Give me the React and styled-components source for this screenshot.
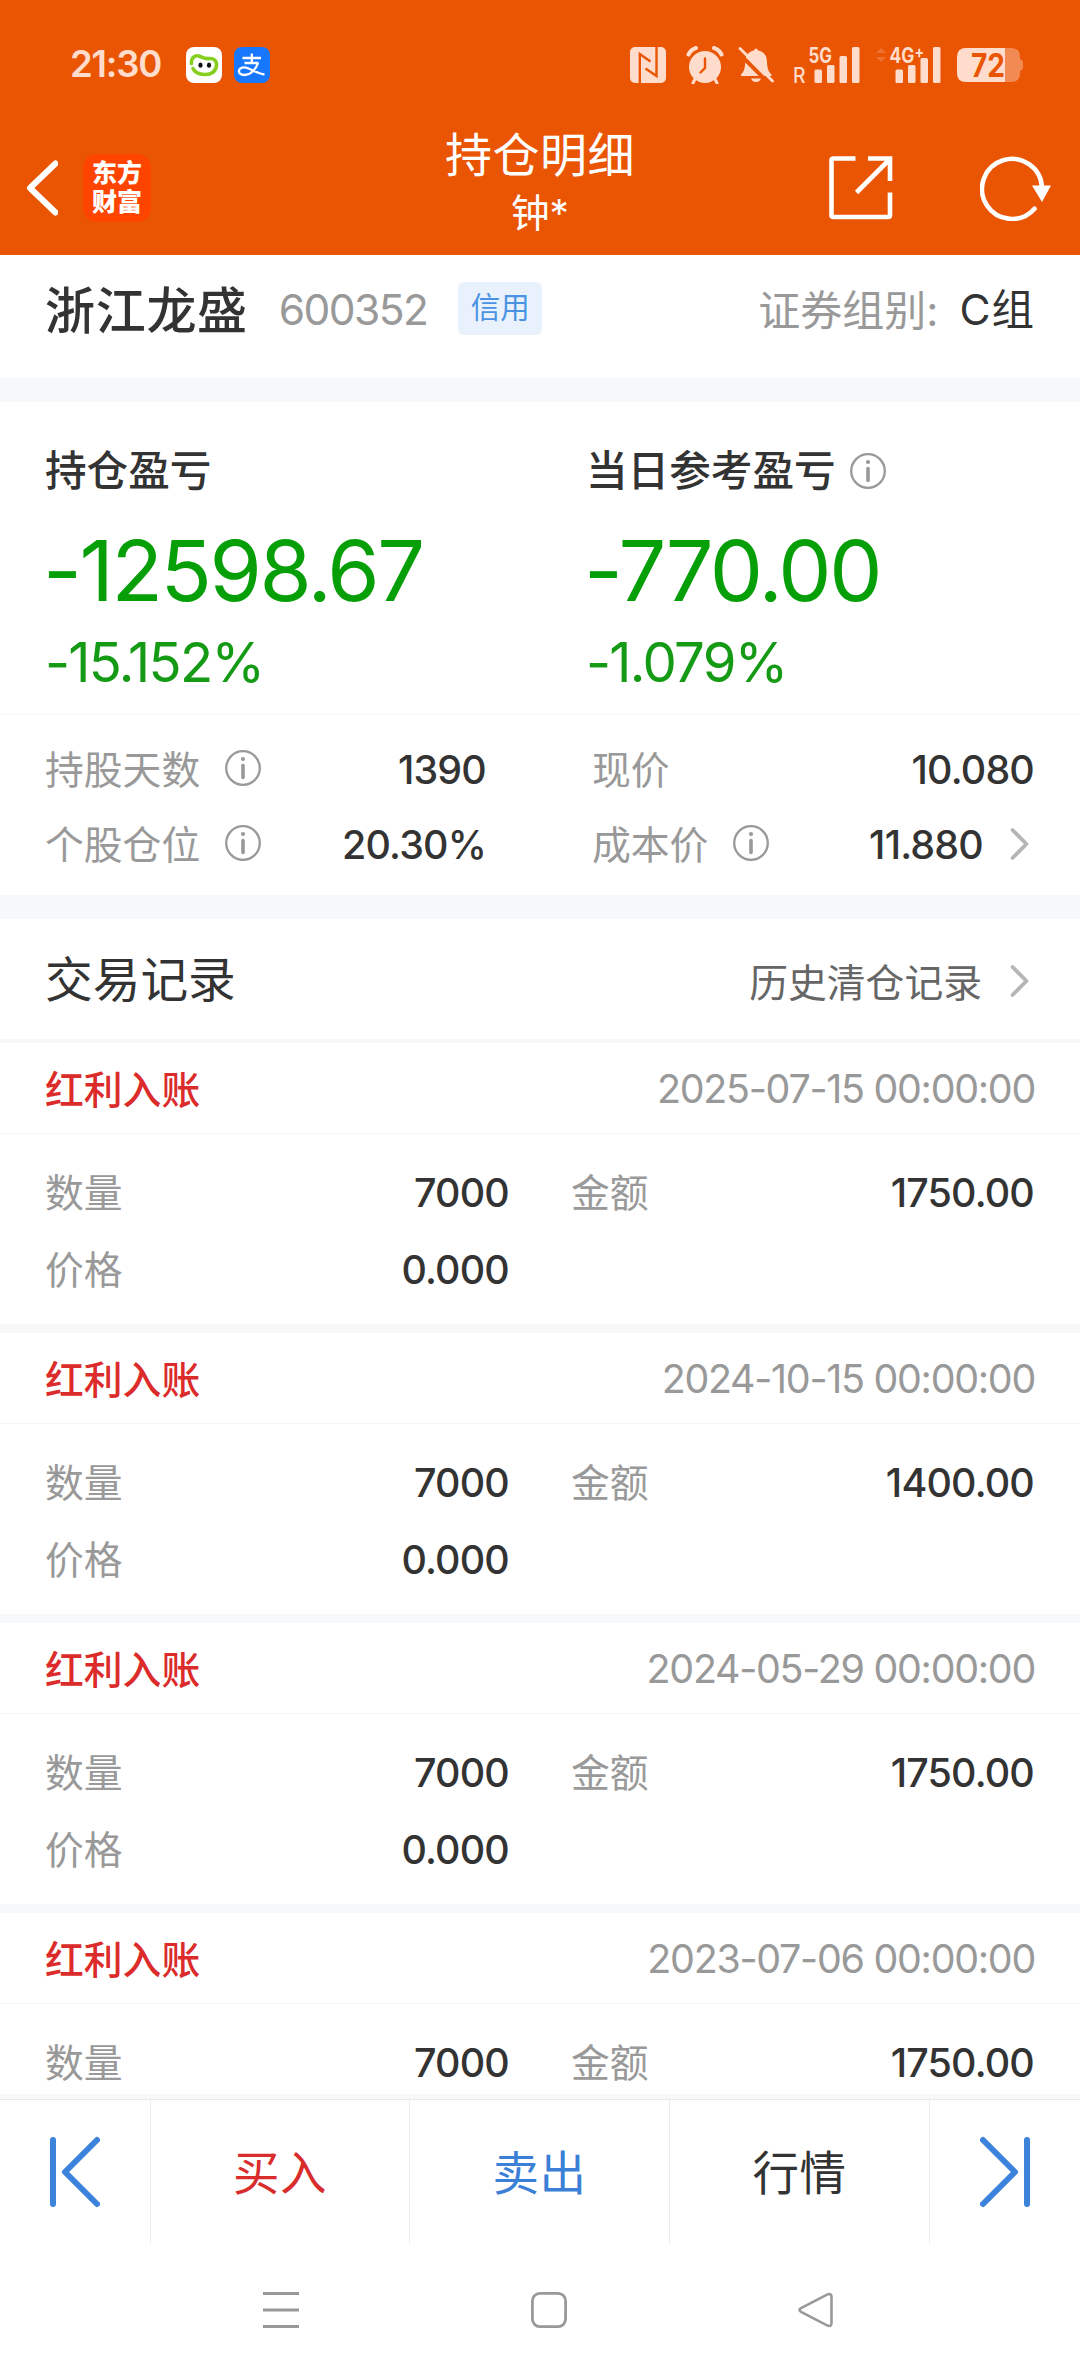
import React from "react";
import styled, { createGlobalStyle } from "styled-components";

const GlobalStyle = createGlobalStyle`
  * {
    box-sizing: border-box;
  }

  body {
    margin: 0;
    background: #fff;
    font-family: "Inter", "Noto Sans CJK SC", sans-serif;
    line-height: 1;
    color: #333;
  }

  svg {
    display: block;
    flex: none;
  }
`;

const Screen = styled.div`
  display: flex;
  flex-direction: column;
  width: 1080px;
  height: 2376px;
  overflow: hidden;
  background: #fff;
`;

const Text = styled.span`
  flex: none;
  white-space: pre;
  font-size: ${({ $size }) => $size || 39}px;
  font-weight: ${({ $weight }) => $weight || 400};
  letter-spacing: ${({ $spacing }) => $spacing || 0}px;
  color: ${({ $color }) => $color || "#333"};
`;

/* ---------- header ---------- */

const Header = styled.header`
  height: 255px;
  background: #ea5504;
  color: #fff;
`;

const StatusBar = styled.div`
  display: flex;
  align-items: center;
  height: 129px;
  padding: 0 57px 0 70px;
`;

const Clock = styled.span`
  width: 116px;
  font-size: 36.5px;
  font-weight: 600;
  letter-spacing: -1.2px;
  color: #ffdccb;
`;

const AppIcons = styled.div`
  display: flex;
  gap: 12px;
  flex: 1;
`;

const StatusIcons = styled.div`
  display: flex;
  align-items: center;
`;

const Gap = styled.i`
  width: ${({ $w }) => $w}px;
`;

const TitleBar = styled.div`
  display: grid;
  grid-template-columns: 1fr 240px 1fr;
  height: 126px;
`;

const TitleLeft = styled.div`
  display: flex;
  align-items: center;
  gap: 25px;
  height: 117px;
  padding-left: 26px;
`;

const TitleRight = styled.div`
  display: flex;
  align-items: center;
  justify-content: flex-end;
  gap: 87px;
  height: 117px;
  padding-right: 28px;
`;

const TitleCenter = styled.div`
  display: flex;
  flex-direction: column;
  align-items: center;
`;

const Title = styled.h1`
  margin: 2px 0 0;
  font-size: 47px;
  font-weight: 400;
  line-height: 48px;
  letter-spacing: 0.5px;
  white-space: nowrap;
`;

const Subtitle = styled.div`
  margin-top: 13px;
  font-size: 38.5px;
  line-height: 42px;
`;

const Logo = styled.div`
  display: flex;
  flex-direction: column;
  justify-content: center;
  align-items: center;
  width: 68px;
  height: 68px;
  border-radius: 14px;
  background: #ff4400;
  font-size: 25px;
  font-weight: 900;
  line-height: 29px;
`;

/* ---------- content ---------- */

const Content = styled.main`
  flex: 1;
  overflow: hidden;
`;

const Divider = styled.div`
  height: ${({ $h }) => $h}px;
  background: #f6f8fa;
`;

const StockRow = styled.section`
  display: flex;
  align-items: center;
  height: 123px;
  padding: 0 45px 12px;
`;

const Badge = styled.span`
  display: flex;
  align-items: center;
  justify-content: center;
  width: 84px;
  height: 53px;
  margin: -5px auto 0 31px;
  border-radius: 6px;
  background: #e9f2fc;
  font-size: 29.5px;
  color: #4a92e3;
`;

const ProfitPanel = styled.section`
  display: grid;
  grid-template-columns: 541px 1fr;
  height: 313px;
  padding: 46px 46px 0 45px;
  border-bottom: 1px solid #f5f6f8;
`;

const ProfitLabel = styled.div`
  display: flex;
  align-items: center;
  gap: 14px;
  height: 48px;
  font-size: 41.6px;
  font-weight: 500;

  svg {
    margin-top: -2px;
  }
`;

const ProfitValue = styled.div`
  margin: 32px 0 0 -2px;
  font-size: 84.5px;
  line-height: 84px;
  letter-spacing: -2.4px;
  color: #079f07;
`;

const ProfitRate = styled.div`
  margin-top: 22px;
  font-size: 54.5px;
  line-height: 56px;
  letter-spacing: -1.7px;
  color: #149a14;
`;

const StatGrid = styled.section`
  display: grid;
  grid-template-columns: 441px 442px;
  column-gap: 106px;
  grid-auto-rows: 75px;
  height: 180px;
  padding: 18px 46px 0 45px;
`;

const Stat = styled.div`
  display: flex;
  align-items: center;
  justify-content: space-between;
`;

const StatName = styled.div`
  display: flex;
  align-items: center;
  gap: 25px;
  font-size: 38.8px;
  color: #999;

  svg {
    margin-top: -5px;
  }
`;

const StatValue = styled.div`
  display: flex;
  align-items: center;
  gap: 27px;
  font-size: 39.4px;
  font-weight: 500;
  letter-spacing: -0.8px;

  svg {
    margin: -4px 5px 0 0;
  }
`;

const SectionHead = styled.div`
  display: flex;
  align-items: center;
  justify-content: space-between;
  height: 124px;
  padding: 4px 51px 0 45px;
  border-bottom: 4px solid #f6f8f9;
`;

const HistoryLink = styled.div`
  display: flex;
  align-items: center;
  gap: 28px;
  padding-top: 5px;

  svg {
    margin-top: -5px;
  }
`;

const Record = styled.article`
  height: 290px;
  border-bottom: 9px solid #f6f8fa;
`;

const RecordHead = styled.div`
  display: flex;
  align-items: center;
  justify-content: space-between;
  height: 91px;
  padding: 4px 45px 0;
  border-bottom: 1px solid #f4f5f7;
`;

const RecordBody = styled.div`
  display: grid;
  grid-template-columns: 464px 463px;
  column-gap: 62px;
  grid-auto-rows: 77px;
  padding: 21px 46px 0 45px;
`;

/* ---------- bottom ---------- */

const BottomBar = styled.footer`
  display: grid;
  grid-template-columns: 151px 259px 260px 260px 150px;
  height: 150px;
  border-top: 5px solid #f6f8f9;
  box-shadow: inset 0 1px 0 #e9e9ea;
`;

const BottomItem = styled.div`
  display: flex;
  align-items: center;
  justify-content: center;
  padding-top: ${({ $color }) => ($color ? 4 : 1)}px;
  border-right: ${({ $last }) => ($last ? "none" : "1px solid #ececee")};
  font-size: 46.5px;
  letter-spacing: 0.6px;
  color: ${({ $color }) => $color};
`;

const SystemNav = styled.nav`
  display: flex;
  justify-content: space-between;
  height: 132px;
  padding: 48px 246px 0 263px;
`;

/* ---------- icons ---------- */

const InfoIcon = () => (
  <svg width="36" height="36" viewBox="0 0 36 36" fill="none">
    <circle cx="18" cy="18" r="16.8" stroke="#999" strokeWidth="2.3" />
    <circle cx="18" cy="9" r="2.1" fill="#999" />
    <path d="M18 15.5v12" stroke="#999" strokeWidth="3.6" strokeLinecap="round" />
  </svg>
);

const ArrowIcon = () => (
  <svg width="19" height="34" viewBox="0 0 19 34" fill="none">
    <path d="M2.500 3l14 14-14 14" stroke="#b5b5b5" strokeWidth="3.8" strokeLinecap="round" strokeLinejoin="round" />
  </svg>
);

const BackIcon = () => (
  <svg width="32" height="56" viewBox="0 0 32 56" fill="none">
    <path d="M29.5 3.5L4 28l25.5 24.5" stroke="#fff" strokeWidth="6" strokeLinecap="round" strokeLinejoin="round" />
  </svg>
);

const ShareIcon = () => (
  <svg width="64" height="64" viewBox="0 0 64 64" fill="none" stroke="#fff" strokeWidth="4.6">
    <path d="M26.5 2.5H4.5Q2.5 2.5 2.5 4.5V59Q2.5 61 4.5 61H59Q61 61 61 59V36.5" />
    <path d="M39 2.5H61V25M60 4L27.5 36.5" />
  </svg>
);

const RefreshIcon = () => (
  <svg width="72" height="66" viewBox="0 0 72 66" fill="none">
    <path d="M54.500 53.800A30 30 0 1 1 62 33" stroke="#fff" strokeWidth="4.600" strokeLinecap="round" />
    <path d="M52 30.500H71L62 47z" fill="#fff" />
  </svg>
);

const ChatIcon = () => (
  <svg width="36" height="36" viewBox="0 0 36 36" fill="none">
    <rect width="36" height="36" rx="8" fill="#fff" />
    <path
      d="M5.500 16.500C5 11 9 7.500 13.500 9.200C17 10.600 18.500 12 22.500 11.600C28 11 31 14 30.500 18.500C30 24.500 25 28 18.500 27.500C12.500 27.200 8.500 25 7 21.500"
      stroke="#86cf1e"
      strokeWidth="3.600"
      strokeLinecap="round"
    />
    <ellipse cx="14.500" cy="18.200" rx="2.100" ry="2.600" fill="#111" />
    <ellipse cx="23" cy="18.200" rx="2.100" ry="2.600" fill="#111" />
  </svg>
);

const PayIcon = () => (
  <svg width="36" height="36" viewBox="0 0 36 36" fill="none" stroke="#fff">
    <rect width="36" height="36" rx="8" fill="#1777ff" stroke="none" />
    <path d="M8.500 11H27M17.800 6.500V16M10.500 16H24.500" strokeWidth="2.300" />
    <path
      d="M24 16C22 22 17 28 10.500 28C6.500 28 4.500 26 5 23.500C5.500 21 8.500 19.800 12 20.700C17 22 23 26.500 30.500 27.500"
      strokeWidth="2.300"
    />
  </svg>
);

const NfcIcon = () => (
  <svg width="36" height="36" viewBox="0 0 36 36" fill="none">
    <rect width="36" height="36" rx="5" fill="#ffdccb" />
    <path d="M9.800 36V7L20.500 14.500M26.500 0V29L15.500 21.500" stroke="#ea5504" strokeWidth="2.400" />
  </svg>
);

const AlarmIcon = () => (
  <svg width="38" height="38" viewBox="0 0 38 38" fill="none" stroke="#ffdccb">
    <circle cx="19" cy="21" r="16" fill="#ffdccb" stroke="none" />
    <path d="M2.500 8.500Q5 3.500 10 2M35.500 8.500Q33 3.500 28 2" strokeWidth="4" strokeLinecap="round" />
    <path d="M9 33l-2 4M29 33l2 4" strokeWidth="3" strokeLinecap="round" />
    <path d="M19 12.500V22l-4.500 4.500" stroke="#ea5504" strokeWidth="2.400" strokeLinecap="round" />
  </svg>
);

const MuteIcon = () => (
  <svg width="36" height="36" viewBox="0 0 36 36" fill="none">
    <path
      d="M18 1.500Q19.500 1.500 19.800 3.200Q28.500 5 29 14.500C29.200 22 30.500 24.500 33.500 27.500V29H3V27.500C6 24.500 7 22 7.200 14.500Q7.500 5 16.200 3.200Q16.500 1.500 18 1.500z"
      fill="#ffdccb"
    />
    <path d="M13 31.500H23Q21.500 35 18 35Q14.500 35 13 31.500z" fill="#ffdccb" />
    <path d="M-1 4.500L31 36.500" stroke="#ea5504" strokeWidth="4" />
    <path d="M2 1.500L34.500 34" stroke="#ffdccb" strokeWidth="2.800" strokeLinecap="round" />
  </svg>
);

// network label on top, four bars rising to the right
const SignalIcon = ({ label, plus, roaming }) => (
  <svg width="68" height="54" viewBox="0 -8 68 54" fill="#ffdccb">
    {roaming ? (
      <text x="0" y="37" fontSize="21" fontWeight="500" textLength="12.5" lengthAdjust="spacingAndGlyphs">R</text>
    ) : (
      <path d="M2 7l5-5 5 5zM2 11l5 5 5-5z" fill="#f1722f" />
    )}
    <text
      x="15.5"
      y="16.5"
      fontSize="21"
      fontWeight="700"
      textLength={plus ? 34.5 : 23.5}
      lengthAdjust="spacingAndGlyphs"
    >
      {label}
      {plus && <tspan dy="-5" fontSize="17">+</tspan>}
    </text>
    <rect x="21.5" y="23.5" width="7.5" height="13.5" rx="1.5" />
    <rect x="34" y="19" width="7.5" height="18" rx="1.5" />
    <rect x="46.5" y={plus ? 12 : 10} width="7.5" height={plus ? 25 : 27} rx="1.5" />
    <rect x="59" y="1" width="7.5" height="36" rx="1.5" />
  </svg>
);

const BatteryIcon = () => (
  <svg width="66" height="46" viewBox="0 -6 66 46">
    <path d="M48 0H54Q63 0 63 9V11Q66 12 66 15V19Q66 22 63 23V25Q63 34 54 34H48z" fill="#f28a54" />
    <path d="M48 0H9Q0 0 0 9V25Q0 34 9 34H48z" fill="#ffdccb" />
    <text x="14" y="29" fontSize="32" fontWeight="700" fill="#ea5504" textLength="34" lengthAdjust="spacingAndGlyphs">
      72
    </text>
  </svg>
);

const StepIcon = ({ flip }) => (
  <svg
    width="50"
    height="72"
    viewBox="0 0 50 72"
    fill="none"
    stroke="#3d82db"
    strokeWidth="6"
    strokeLinecap="round"
    strokeLinejoin="round"
    transform={flip ? "scale(-1 1)" : undefined}
  >
    <path d="M3 4V68M47 4L15 36L47 68" />
  </svg>
);

const MenuIcon = () => (
  <svg width="36" height="36" viewBox="0 0 36 36" stroke="#999" strokeWidth="3">
    <path d="M0 1.5H36M0 18H36M0 34.5H36" />
  </svg>
);

const HomeIcon = () => (
  <svg width="36" height="36" viewBox="0 0 36 36" fill="none" stroke="#999" strokeWidth="2.8">
    <rect x="1.4" y="1.4" width="33.2" height="33.2" rx="7.5" />
  </svg>
);

const NavBackIcon = () => (
  <svg width="36" height="36" viewBox="0 0 36 36" fill="none" stroke="#999" strokeWidth="2.6">
    <path d="M3 16.200L29.500 2.400Q33.500 1 33.500 5V31Q33.500 35 29.500 33.600L3 19.800Q0 18 3 16.200z" />
  </svg>
);

/* ---------- page ---------- */

const records = [
  { date: "2025-07-15 00:00:00", amount: "1750.00", price: "0.000" },
  { date: "2024-10-15 00:00:00", amount: "1400.00", price: "0.000" },
  { date: "2024-05-29 00:00:00", amount: "1750.00", price: "0.000" },
  { date: "2023-07-06 00:00:00", amount: "1750.00" },
];

const Field = ({ name, value, info, arrow }) => (
  <Stat>
    <StatName>
      {name}
      {info && <InfoIcon />}
    </StatName>
    <StatValue>
      {value}
      {arrow && <ArrowIcon />}
    </StatValue>
  </Stat>
);

const App = () => {
  return (
    <Screen>
      <GlobalStyle />
      <Header>
        <StatusBar>
          <Clock>21:30</Clock>
          <AppIcons>
            <ChatIcon />
            <PayIcon />
          </AppIcons>
          <StatusIcons>
            <NfcIcon />
            <Gap $w={20} />
            <AlarmIcon />
            <Gap $w={14} />
            <MuteIcon />
            <Gap $w={19} />
            <SignalIcon label="5G" roaming />
            <Gap $w={13} />
            <SignalIcon label="4G" plus />
            <Gap $w={15} />
            <BatteryIcon />
          </StatusIcons>
        </StatusBar>
        <TitleBar>
          <TitleLeft>
            <BackIcon />
            <Logo>
              <span>东方</span>
              <span>财富</span>
            </Logo>
          </TitleLeft>
          <TitleCenter>
            <Title>持仓明细</Title>
            <Subtitle>钟*</Subtitle>
          </TitleCenter>
          <TitleRight>
            <ShareIcon />
            <RefreshIcon />
          </TitleRight>
        </TitleBar>
      </Header>

      <Content>
        <StockRow>
          <Text $size={50} $weight={500} $spacing={0.7}>浙江龙盛</Text>
          <Gap $w={31} />
          <Text $size={42.5} $spacing={-1.6} $color="#999">600352</Text>
          <Badge>信用</Badge>
          <Text $size={42} $color="#999">证券组别:</Text>
          <Gap $w={21} />
          <Text $size={42.5} $spacing={1}>C组</Text>
        </StockRow>
        <Divider $h={24} />

        <ProfitPanel>
          <div>
            <ProfitLabel>持仓盈亏</ProfitLabel>
            <ProfitValue>-12598.67</ProfitValue>
            <ProfitRate>-15.152%</ProfitRate>
          </div>
          <div>
            <ProfitLabel>
              当日参考盈亏
              <InfoIcon />
            </ProfitLabel>
            <ProfitValue>-770.00</ProfitValue>
            <ProfitRate>-1.079%</ProfitRate>
          </div>
        </ProfitPanel>
        <StatGrid>
          <Field name="持股天数" value="1390" info />
          <Field name="现价" value="10.080" />
          <Field name="个股仓位" value="20.30%" info />
          <Field name="成本价" value="11.880" info arrow />
        </StatGrid>
        <Divider $h={24} />

        <SectionHead>
          <Text $size={47.7}>交易记录</Text>
          <HistoryLink>
            <Text $size={38.8} $color="#666">历史清仓记录</Text>
            <ArrowIcon />
          </HistoryLink>
        </SectionHead>
        {records.map((record) => (
          <Record key={record.date}>
            <RecordHead>
              <Text $size={38.8} $weight={500} $color="#dc2b2b">红利入账</Text>
              <Text $size={39.4} $spacing={-1.28} $color="#999">{record.date}</Text>
            </RecordHead>
            <RecordBody>
              <Field name="数量" value="7000" />
              <Field name="金额" value={record.amount} />
              {record.price && <Field name="价格" value={record.price} />}
            </RecordBody>
          </Record>
        ))}
      </Content>

      <BottomBar>
        <BottomItem><StepIcon /></BottomItem>
        <BottomItem $color="#d92c2c">买入</BottomItem>
        <BottomItem $color="#3b7fd6">卖出</BottomItem>
        <BottomItem $color="#333">行情</BottomItem>
        <BottomItem $last><StepIcon flip /></BottomItem>
      </BottomBar>
      <SystemNav>
        <MenuIcon />
        <HomeIcon />
        <NavBackIcon />
      </SystemNav>
    </Screen>
  );
};

export default App;
